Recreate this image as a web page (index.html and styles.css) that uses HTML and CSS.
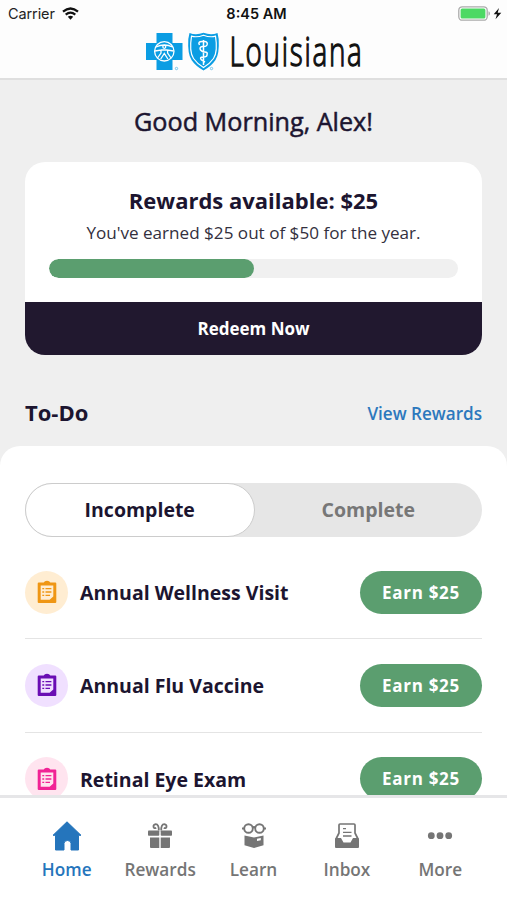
FILE: index.html
```html
<!DOCTYPE html>
<html lang="en">
<head>
<meta charset="utf-8">
<title>Home</title>
<link rel="stylesheet" href="styles.css">
</head>
<body>
<svg class="defs" width="0" height="0" aria-hidden="true">
  <symbol id="clipboard" viewBox="0 0 20 24">
    <path fill="currentColor" fill-rule="evenodd" d="M1.800 2.500H6.700Q7.500 .7 10 .7T13.300 2.500H18.200Q19.300 2.500 19.300 3.600V21.900Q19.300 23 18.200 23H1.800Q.7 23 .7 21.900V3.600Q.7 2.500 1.800 2.500ZM3.700 5.600V19.800H12.600L16.300 16.600V5.600Z"/>
    <path fill="none" stroke="currentColor" stroke-width="1.300" d="M5.300 8.600H7.200M8.500 8.600H14.400M5.300 12H7.200M8.500 12H14.400M5.300 15.400H7.200M8.500 15.400H13"/>
  </symbol>
</svg>
<div class="app">
  <header class="header">
    <div class="status">
      <div class="carrier">
        <span>Carrier</span>
        <svg width="17" height="13" viewBox="0 0 17 13"><path fill="none" stroke="#111" stroke-width="2.200" d="M1 4.700Q8.500-1.700 16 4.700M3.700 7.700Q8.500 3.700 13.300 7.700"/><path fill="#111" d="M5.800 9.800Q8.500 7.500 11.200 9.800L8.500 12.700Z"/></svg>
      </div>
      <div class="clock">8:45 AM</div>
      <div class="power">
        <svg width="44" height="15" viewBox="0 0 44 15"><rect x=".8" y=".8" width="28.400" height="13.400" rx="3.500" fill="#fff" stroke="#aaa" stroke-width="1.300"/><rect x="2.600" y="2.600" width="24.800" height="9.800" rx="1.500" fill="#4cd964"/><path d="M30.500 5.200Q32 5.800 32 7.500T30.500 9.800Z" fill="#aaa"/><path d="M41 2L35.700 8.300H39L37.500 13.300L43.300 6.700H39.700Z" fill="#111"/></svg>
      </div>
    </div>
    <div class="brand">
      <svg class="logo" width="240" height="46" viewBox="0 0 240 46">
        <path fill="#0b9de3" d="M11.500 1H27.500V11H37.500V28H27.500V38H11.500V28H1V11H11.500Z"/>
        <g fill="none" stroke="#fff" stroke-width="1.300"><circle cx="19.300" cy="19.300" r="9.700"/><path d="M11 15Q19.300 11 27.600 15M10 19L16 18V21L12.500 26M28.600 19L22.600 18V21L26.100 26M16 18H22.600M15.700 27L19.300 21.500L22.900 27"/><circle cx="19.300" cy="14.800" r="1.500"/></g>
        <path fill="#0b9de3" d="M44.500 1Q51 3.500 58.500 .8Q66 3.500 72.500 1L73.700 7Q74.500 22 70.500 28Q66.500 34 58.500 38.500Q50.500 34 46.500 28Q42.500 22 43.300 7Z"/>
        <path fill="none" stroke="#fff" stroke-width="1.200" d="M46.500 4.200Q52 5.700 58.500 3.200Q65 5.700 70.500 4.200Q73 20 68.500 26.500Q65 31.500 58.500 35.500Q52 31.500 48.500 26.500Q44 20 46.500 4.200Z"/>
        <path fill="none" stroke="#fff" stroke-width="1.500" d="M58.500 8V33M54.500 13Q52.500 9.500 57 9.500H60Q63 10 62 13Q61 15 57.500 14.500Q54 15 55.500 18Q57 20 60 20T62 23Q62 25 58 25T56.500 28L60 30"/>
        <g fill="none" stroke="#58b9e8" stroke-width=".8"><circle cx="31.500" cy="36.500" r="1.200"/><circle cx="66.500" cy="36.500" r="1.200"/></g>
        <text class="wordmark" x="84.500" y="34" textLength="134" lengthAdjust="spacingAndGlyphs">Louisiana</text>
      </svg>
    </div>
  </header>
  <main class="main">
    <h1 class="greeting">Good Morning, Alex!</h1>
    <section class="card">
      <div class="card-body">
        <h2 class="card-title">Rewards available: $25</h2>
        <p class="card-text">You've earned $25 out of $50 for the year.</p>
        <div class="progress"><div class="progress-fill" style="width:50%"></div></div>
      </div>
      <div class="redeem"><span>Redeem Now</span></div>
    </section>
    <div class="todo-head"><h2 class="todo-title">To-Do</h2><a class="view">View Rewards</a></div>
    <section class="sheet">
      <div class="segments"><div class="segment active">Incomplete</div><div class="segment">Complete</div></div>
      <div class="list">
        <div class="row"><div class="badge orange"><svg width="20" height="24"><use href="#clipboard"/></svg></div><span class="name">Annual Wellness Visit</span><div class="earn">Earn $25</div></div>
        <div class="row"><div class="badge purple"><svg width="20" height="24"><use href="#clipboard"/></svg></div><span class="name">Annual Flu Vaccine</span><div class="earn">Earn $25</div></div>
        <div class="row"><div class="badge pink"><svg width="20" height="24"><use href="#clipboard"/></svg></div><span class="name">Retinal Eye Exam</span><div class="earn">Earn $25</div></div>
      </div>
    </section>
  </main>
  <nav class="tabs">
    <div class="tab current"><svg width="32" height="32" viewBox="0 0 32 32"><path fill="currentColor" stroke="currentColor" stroke-linejoin="round" d="M16 1.800L30 15.300H27.500V30H20V23.500Q20 20.500 16.500 20.500T13 23.500V30H4.500V15.300H2Z"/></svg><span>Home</span></div>
    <div class="tab"><svg width="32" height="32" viewBox="0 0 32 32"><g fill="currentColor"><rect x="4" y="10.500" width="11.300" height="5.200" rx=".8"/><rect x="16.700" y="10.500" width="11.300" height="5.200" rx=".8"/><path d="M6 17.500H15.300V28H7Q6 28 6 27ZM16.700 17.500H26V27Q26 28 25 28H16.700Z"/></g><path fill="none" stroke="currentColor" stroke-width="1.800" d="M14.800 10.500Q15 4.200 11.700 4.200Q9.200 4.500 9.500 7Q10.200 9 12.200 7.700M17.200 10.500Q17 4.200 20.300 4.200Q22.800 4.500 22.500 7Q21.800 9 19.800 7.700"/></svg><span>Rewards</span></div>
    <div class="tab"><svg width="32" height="32" viewBox="0 0 32 32"><g fill="none" stroke="currentColor" stroke-width="1.900"><circle cx="10.500" cy="8.500" r="4.300"/><circle cx="21.500" cy="8.500" r="4.300"/><path d="M14.500 7.700Q16 6.500 17.500 7.700M4 8.500H6.500M25.500 8.500H28"/></g><path fill="currentColor" fill-rule="evenodd" d="M6.500 15.500L16 17.500L25.500 15.500V25.300L16 28L6.500 25.300ZM19 18.800V21L22.800 20.200V18Z"/></svg><span>Learn</span></div>
    <div class="tab"><svg width="32" height="32" viewBox="0 0 32 32"><path fill="none" stroke="currentColor" stroke-width="1.700" stroke-linejoin="round" d="M5 19L8 13V5Q8 4 9 4H23Q24 4 24 5V13L27 19"/><path fill="currentColor" d="M5 18H10L12.500 22.500H19.500L22 18H27Q28 18 28 19V27Q28 28 27 28H5Q4 28 4 27V19Q4 18 5 18Z"/><path fill="none" stroke="currentColor" stroke-width="1.300" d="M12 8.700H15M12 12.400H20.500M12 16H20.500"/></svg><span>Inbox</span></div>
    <div class="tab"><svg width="32" height="32" viewBox="0 0 32 32"><g fill="currentColor"><circle cx="7.300" cy="15.700" r="3.400"/><circle cx="16" cy="15.700" r="3.400"/><circle cx="24.700" cy="15.700" r="3.400"/></g></svg><span>More</span></div>
  </nav>
</div>
</body>
</html>
```

FILE: styles.css
```css
* { box-sizing: border-box; }
body { margin: 0; font-family: "Open Sans", sans-serif; color: #1c1530; background: #fff; }
h1, h2, p { margin: 0; }
svg { display: block; flex: none; }
.defs { position: absolute; }
.app { height: 900px; display: flex; flex-direction: column; overflow: hidden; }
.header { flex: none; height: 80px; background: #fdfdfd; border-bottom: 2px solid #dfdfdf; }
.status { height: 28px; padding: 0 5px 0 8px; display: grid; grid-template-columns: 1fr auto 1fr; align-items: center; font: 14.5px/26px Inter, sans-serif; color: #222; }
.carrier { display: flex; align-items: center; gap: 7px; letter-spacing: -.1px; }
.carrier svg { margin-top: -2px; }
.clock { font-weight: 600; color: #111; padding-left: 3px; }
.power { justify-self: end; margin-top: -2px; }
.brand { height: 50px; padding: 4px 0 0 145px; }
.logo { overflow: visible; }
.wordmark { font: 300 40px "Open Sans", sans-serif; letter-spacing: 2.5px; fill: #111; stroke: #111; stroke-width: 1.3px; }
.main { flex: 1; min-height: 0; overflow: hidden; background: #efefef; }
.greeting { padding-top: 23px; height: 82px; line-height: 36px; font-size: 25.200px; font-weight: 400; -webkit-text-stroke: .5px #1c1530; text-align: center; }
.card { margin: 0 25px; height: 193px; border-radius: 20px; overflow: hidden; background: #fff; display: flex; flex-direction: column; }
.card-body { height: 140px; padding: 22px 24px 0; text-align: center; }
.card-title { font-size: 22px; line-height: 32px; font-weight: 700; }
.card-text { font-size: 17.100px; line-height: 24px; margin-top: 5px; color: #33303e; white-space: nowrap; }
.progress { margin-top: 14px; height: 19px; border-radius: 10px; background: #f0f0f0; overflow: hidden; }
.progress-fill { height: 100%; border-radius: 10px; background: #5b9e6f; }
.redeem { flex: 1; background: #21182f; color: #fff; display: flex; align-items: center; justify-content: center; font-size: 17px; font-weight: 700; }
.todo-head { height: 91px; padding: 24px 25px 0; display: flex; justify-content: space-between; }
.todo-title { font-size: 22px; line-height: 66px; }
.view { font-size: 17.100px; line-height: 69px; font-weight: 600; color: #2c78bd; }
.sheet { background: #fff; border-radius: 20px 20px 0 0; padding: 37px 25px 0; height: 420px; }
.segments { height: 54px; border-radius: 27px; background: #e6e6e6; display: flex; }
.segment { flex: 1; display: flex; align-items: center; justify-content: center; padding-bottom: 2px; font-size: 19.500px; font-weight: 700; color: #777; }
.segment.active { background: #fff; border: 1px solid #ccc; border-radius: 27px; color: #1c1530; }
.list { padding-top: 9px; }
.row { height: 93.300px; display: flex; align-items: center; border-bottom: 1px solid #e4e4e4; }
.badge { width: 43px; height: 43px; border-radius: 50%; display: flex; align-items: center; justify-content: center; }
.orange { background: #ffedd2; color: #ef9614; }
.purple { background: #f0e0ff; color: #6a0db4; }
.pink { background: #ffe4ef; color: #f12395; }
.name { flex: 1; margin-left: 12px; padding-top: 1px; font-size: 19.500px; font-weight: 700; }
.earn { width: 122px; height: 43px; border-radius: 22px; background: #5b9e6f; color: #fff; display: flex; align-items: center; justify-content: center; font-size: 17px; font-weight: 700; letter-spacing: .7px; }
.tabs { flex: none; height: 105px; border-top: 3px solid #e6e6e8; background: #fff; padding: 22px 20px 0; display: flex; }
.tab { flex: 1; display: flex; flex-direction: column; align-items: center; color: #757575; font-size: 17.200px; font-weight: 600; line-height: 24px; gap: 6px; }
.tab.current { color: #2575bc; }
```
